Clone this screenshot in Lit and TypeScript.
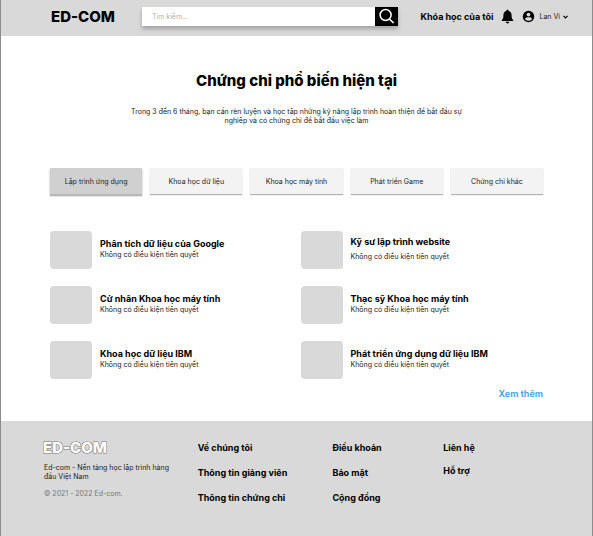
import { LitElement, html, css } from "lit";
import { customElement, property, state } from "lit/decorators.js";
import { classMap } from "lit/directives/class-map.js";

@customElement("site-header")
class SiteHeader extends LitElement {
  static styles = css`
    :host { display: block; background: #d9d9d9; }
    .bar { display: flex; align-items: center; height: 36px; padding: 0 24px 3px 50px; box-sizing: border-box; }
    .logo { flex: none; width: 91px; font-size: 15px; line-height: 21px; font-weight: 800; color: #000; text-decoration: none; }
    .search { display: flex; flex: 1; height: 19px; box-shadow: 0 3px 4px rgba(0, 0, 0, 0.25); }
    .field { flex: 1; min-width: 0; border: 0; padding: 1px 10px 0; background: #fff; font: 400 7px/12px Inter, sans-serif; outline: none; }
    .field::placeholder { color: #b0b0b0; opacity: 1; }
    .go { width: 23px; padding: 0; border: 0; background: #000; display: grid; place-items: center; }
    .mine { margin-left: 22px; font-size: 9px; line-height: 17px; font-weight: 700; color: #000; text-decoration: none; white-space: nowrap; }
    .icon { border: 0; padding: 0; background: none; display: grid; margin-left: 8px; }
    .user { border: 0; padding: 0; background: none; display: flex; align-items: center; gap: 3px; margin-left: 4px; font: 400 7px/13px Inter, sans-serif; color: #222; white-space: nowrap; }
    svg { display: block; }
  `;
  render() {
    return html`
      <header class="bar">
        <a class="logo" href="#">ED-COM</a>
        <form class="search" role="search">
          <input class="field" type="search" aria-label="Tìm kiếm" placeholder="Tìm kiếm..." />
          <button class="go" type="button" aria-label="Tìm kiếm">
            <svg width="17" height="17" viewBox="0 0 17 17" fill="none" stroke="#fff" stroke-width="1.5" stroke-linecap="round">
              <circle cx="7.6" cy="7" r="5.5" /><path d="M11.6 11.2 15.2 14.600" />
            </svg>
          </button>
        </form>
        <a class="mine" href="#">Khóa học của tôi</a>
        <button class="icon" type="button" aria-label="Thông báo">
          <svg width="13" height="15" viewBox="0 0 12 14" fill="#000">
            <path d="M6 .7c.7 0 1.1.5 1.1 1.1 1.8.5 2.7 2 2.7 3.8 0 2.8.4 3.6 1.5 4.7.3.4.1 1-.5 1H1.2c-.6 0-.8-.6-.5-1C1.800 9.200 2.200 8.400 2.200 5.600c0-1.800.9-3.300 2.700-3.800C4.900 1.200 5.300.7 6 .7ZM4.400 12h3.200c0 .9-.7 1.500-1.600 1.500S4.400 12.900 4.400 12Z" />
          </svg>
        </button>
        <button class="icon" type="button" aria-label="Tài khoản">
          <svg width="13" height="13" viewBox="0 0 12 12">
            <circle cx="6" cy="6" r="5.300" fill="#000" />
            <circle cx="6" cy="4.200" r="1.700" fill="#d9d9d9" />
            <path d="M2.600 8.300C3.400 7.200 4.600 6.800 6 6.800s2.600.4 3.400 1.500C8.600 9.400 7.400 10 6 10S3.400 9.400 2.600 8.300Z" fill="#d9d9d9" />
          </svg>
        </button>
        <button class="user" type="button">
          <span>Lan Vi</span>
          <svg width="5" height="4" viewBox="0 0 5 4" fill="none" stroke="#000" stroke-width="1.200"><path d="m.5.8 2 2 2-2" /></svg>
        </button>
      </header>
    `;
  }
}

@customElement("course-item")
class CourseItem extends LitElement {
  @property() name = "";
  @property({ type: Boolean }) spaced = false;
  static styles = css`
    :host { display: block; }
    .item { display: flex; align-items: center; gap: 8px; height: 38px; }
    .thumb { flex: none; width: 42px; height: 38px; border-radius: 4px; background: #d9d9d9; }
    .text { display: flex; flex-direction: column; padding-bottom: 3px; }
    .spaced { gap: 4px; }
    .name { margin: 0; font-size: 9px; line-height: 12px; font-weight: 700; color: #000; }
    .note { margin: 0; font-size: 7px; line-height: 9px; color: #222; }
  `;
  render() {
    return html`
      <article class="item">
        <div class="thumb"></div>
        <div class=${classMap({ text: true, spaced: this.spaced })}>
          <h2 class="name">${this.name}</h2>
          <p class="note">Không có điều kiện tiên quyết</p>
        </div>
      </article>
    `;
  }
}

@customElement("site-footer")
class SiteFooter extends LitElement {
  static styles = css`
    :host { display: block; flex: 1; background: #d9d9d9; }
    .foot { display: grid; grid-template-columns: 155fr 135fr 111fr 107fr; padding: 19px 42px 28px; }
    .logo { font-size: 15px; line-height: 16px; font-weight: 800; color: #fff; -webkit-text-stroke: 1px #777; paint-order: stroke fill; }
    .about { margin: 7px 20px 0 1px; font-size: 7px; line-height: 9px; color: #222; }
    .copy { margin: 8px 0 0 1px; font-size: 7px; line-height: 9px; color: #777; }
    .links { display: flex; flex-direction: column; align-items: flex-start; gap: 13px; padding-top: 2px; }
    .tight { gap: 11px; }
    .link { font-size: 9px; line-height: 12px; font-weight: 700; color: #000; text-decoration: none; white-space: nowrap; }
  `;
  groups = [
    ["Về chúng tôi", "Thông tin giảng viên", "Thông tin chứng chỉ"],
    ["Điều khoản", "Bảo mật", "Cộng đồng"],
    ["Liên hệ", "Hỗ trợ"],
  ];
  render() {
    return html`
      <footer class="foot">
        <div>
          <div class="logo">ED-COM</div>
          <p class="about">Ed-com - Nền tảng học lập trình hàng đầu Việt Nam</p>
          <p class="copy">© 2021 - 2022 Ed-com.</p>
        </div>
        ${this.groups.map(
          (g) => html`<nav class=${classMap({ links: true, tight: g.length < 3 })}>
            ${g.map((t) => html`<a class="link" href="#">${t}</a>`)}
          </nav>`
        )}
      </footer>
    `;
  }
}

@customElement("app-root")
class AppRoot extends LitElement {
  @state() active = 0;
  tabs = ["Lập trình ứng dụng", "Khoa học dữ liệu", "Khoa học máy tính", "Phát triển Game", "Chứng chỉ khác"];
  courses = [
    "Phân tích dữ liệu của Google",
    "Kỹ sư lập trình website",
    "Cử nhân Khoa học máy tính",
    "Thạc sỹ Khoa học máy tính",
    "Khoa học dữ liệu IBM",
    "Phát triển ứng dụng dữ liệu IBM",
  ];
  static styles = css`
    :host { display: flex; flex-direction: column; min-height: 100vh; box-sizing: border-box; border: solid #8c8c8c; border-width: 0 1px; background: #fff; font-family: Inter, "Noto Sans", sans-serif; }
    .main { padding: 33px 49px 21px; }
    .title { margin: 0; text-align: center; font-size: 15px; line-height: 24px; font-weight: 800; color: #000; }
    .lead { margin: 14px auto 0; max-width: 336px; text-align: center; font-size: 7px; line-height: 9px; color: #222; }
    .tabs { display: grid; grid-template-columns: repeat(5, 1fr); gap: 8px; margin-top: 43px; }
    .tab { height: 26px; padding: 1px 0 0; border: 0; background: #f3f3f3; font: 400 7px/13px Inter, sans-serif; color: #222; box-shadow: 0 1px 1px rgba(0, 0, 0, 0.3); }
    .on { background: #d0d0d0; box-shadow: 0 2px 0 #b8b8b8, 0 2px 2px rgba(0, 0, 0, 0.3); }
    .courses { display: grid; grid-template-columns: 1fr 1fr; gap: 17px 8px; margin-top: 37px; }
    .more { display: block; width: fit-content; margin: 9px 0 0 auto; font-size: 9px; line-height: 12px; font-weight: 700; color: #45a8f0; text-decoration: none; }
  `;
  render() {
    return html`
      <site-header></site-header>
      <main class="main">
        <h1 class="title">Chứng chỉ phổ biến hiện tại</h1>
        <p class="lead">Trong 3 đến 6 tháng, bạn cần rèn luyện và học tập những kỹ năng lập trình hoàn thiện để bắt đầu sự nghiêp và có chứng chỉ để bắt đầu việc làm</p>
        <div class="tabs">
          ${this.tabs.map(
            (t, i) => html`<button type="button" class=${classMap({ tab: true, on: i === this.active })}
              aria-pressed=${i === this.active} @click=${() => (this.active = i)}>${t}</button>`
          )}
        </div>
        <div class="courses">
          ${this.courses.map((c, i) => html`<course-item .name=${c} .spaced=${i === 1}></course-item>`)}
        </div>
        <a class="more" href="#">Xem thêm</a>
      </main>
      <site-footer></site-footer>
    `;
  }
}
